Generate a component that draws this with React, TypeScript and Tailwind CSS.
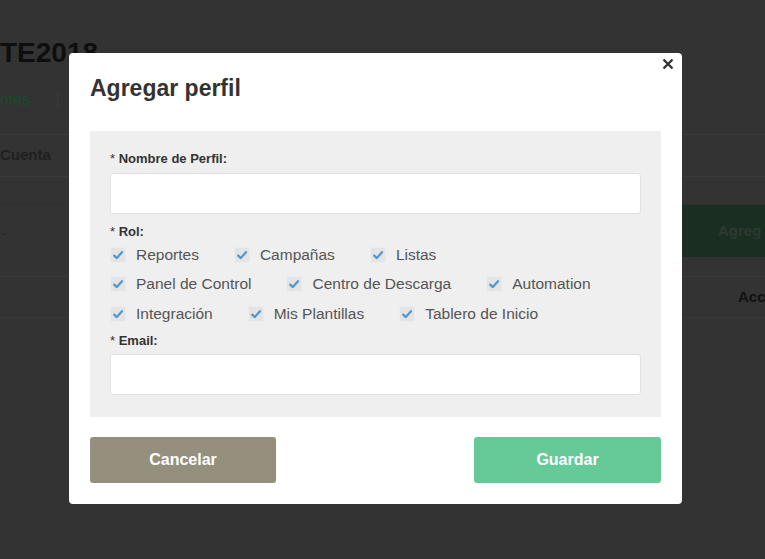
import React from "react";

function Check({ label }: { label: string }) {
  return (
    <div className="flex items-center mr-[35px]">
      <span className="w-[16px] h-[16px] rounded-[2px] bg-[#e4e4e4] border border-[#ececec] flex items-center justify-center mr-[10px]">
        <svg width="12" height="12" viewBox="0 0 12 12">
          <path d="M2.2 6.6 L4.8 9.1 L10 3.2" fill="none" stroke="#4f98d2" strokeWidth="2.2" strokeLinecap="round" strokeLinejoin="round" />
        </svg>
      </span>
      <span className="text-[15.5px] text-[#555] leading-[18px]">{label}</span>
    </div>
  );
}

function Label({ text, className = "" }: { text: string; className?: string }) {
  return (
    <div className={"text-[13px] leading-[17px] text-[#333] " + className}>
      <span className="font-normal">* </span>
      <span className="font-bold">{text}</span>
    </div>
  );
}

export default function App() {
  const rows = [
    ["Reportes", "Campañas", "Listas"],
    ["Panel de Control", "Centro de Descarga", "Automation"],
    ["Integración", "Mis Plantillas", "Tablero de Inicio"],
  ];
  return (
    <div className="relative w-[765px] h-[559px] overflow-hidden bg-[#333333] font-['Liberation_Sans',Arial,sans-serif]">
      {/* background page (dimmed) */}
      <div className="flex flex-col">
        <div className="h-[135px] border-b border-[#3b3b3b] flex flex-col">
          <div className="pt-[37px] text-[28px] leading-[32px] font-bold text-[#0e0e0e]">TE2018</div>
          <div className="mt-[22px] flex items-center">
            <span className="text-[16px] leading-[18px] text-[#1a4a2c]">ntes</span>
            <span className="ml-[27px] w-px h-[16px] bg-[#3a3a3a]" />
          </div>
        </div>
        <div className="h-[42px] border-b border-[#3a3a3a] flex items-center">
          <span className="text-[15px] font-bold text-[#202020]">Cuenta</span>
        </div>
        <div className="h-[28px] border-b border-[#2f2f2f]" />
        <div className="h-[52px] flex justify-between items-center">
          <span className="text-[10px] text-[#111] ml-[2px]">.</span>
          <div className="w-[83px] h-full bg-[#1b2e22] flex items-center pl-[36px]">
            <span className="text-[15px] font-bold text-[#2c3a31]">Agreg</span>
          </div>
        </div>
        <div className="h-[20px] border-b border-[#3a3a3a]" />
        <div className="h-[41px] border-b border-[#383838] flex justify-end items-center">
          <span className="w-[27px] text-[15px] font-bold text-[#121212] overflow-hidden whitespace-nowrap">Acc</span>
        </div>
      </div>

      {/* modal */}
      <div className="absolute left-[69px] top-[53px] w-[613px] h-[451px] bg-white rounded-[4px] px-[21px] pt-[22px]">
        <button className="absolute right-[8px] top-[5px] w-[12px] h-[12px]">
          <svg width="12" height="12" viewBox="0 0 12 12">
            <path d="M1.5 1.5 L10.5 10.5 M10.5 1.5 L1.5 10.5" stroke="#333" strokeWidth="2.4" />
          </svg>
        </button>
        <div className="text-[23px] leading-[27px] font-bold text-[#333]">Agregar perfil</div>
        <div className="mt-[29px] bg-[#efefef] px-[20px] pt-[19px] pb-[22px]">
          <Label text="Nombre de Perfil:" />
          <div className="mt-[6px] h-[41px] bg-white border border-[#e2e2e2] rounded-[3px]" />
          <Label text="Rol:" className="mt-[9px]" />
          <div className="flex flex-col">
            {rows.map((r, i) => (
              <div key={i} className="h-[29.5px] flex items-center">
                {r.map((l) => (
                  <Check key={l} label={l} />
                ))}
              </div>
            ))}
          </div>
          <Label text="Email:" className="mt-[3px]" />
          <div className="mt-[5px] h-[41px] bg-white border border-[#e2e2e2] rounded-[3px]" />
        </div>
        <div className="mt-[20px] flex justify-between">
          <button className="w-[186px] h-[46px] rounded-[3px] bg-[#958f7e] text-white text-[16px] font-bold">Cancelar</button>
          <button className="w-[187px] h-[46px] rounded-[3px] bg-[#65c998] text-white text-[16px] font-bold">Guardar</button>
        </div>
      </div>
    </div>
  );
}
